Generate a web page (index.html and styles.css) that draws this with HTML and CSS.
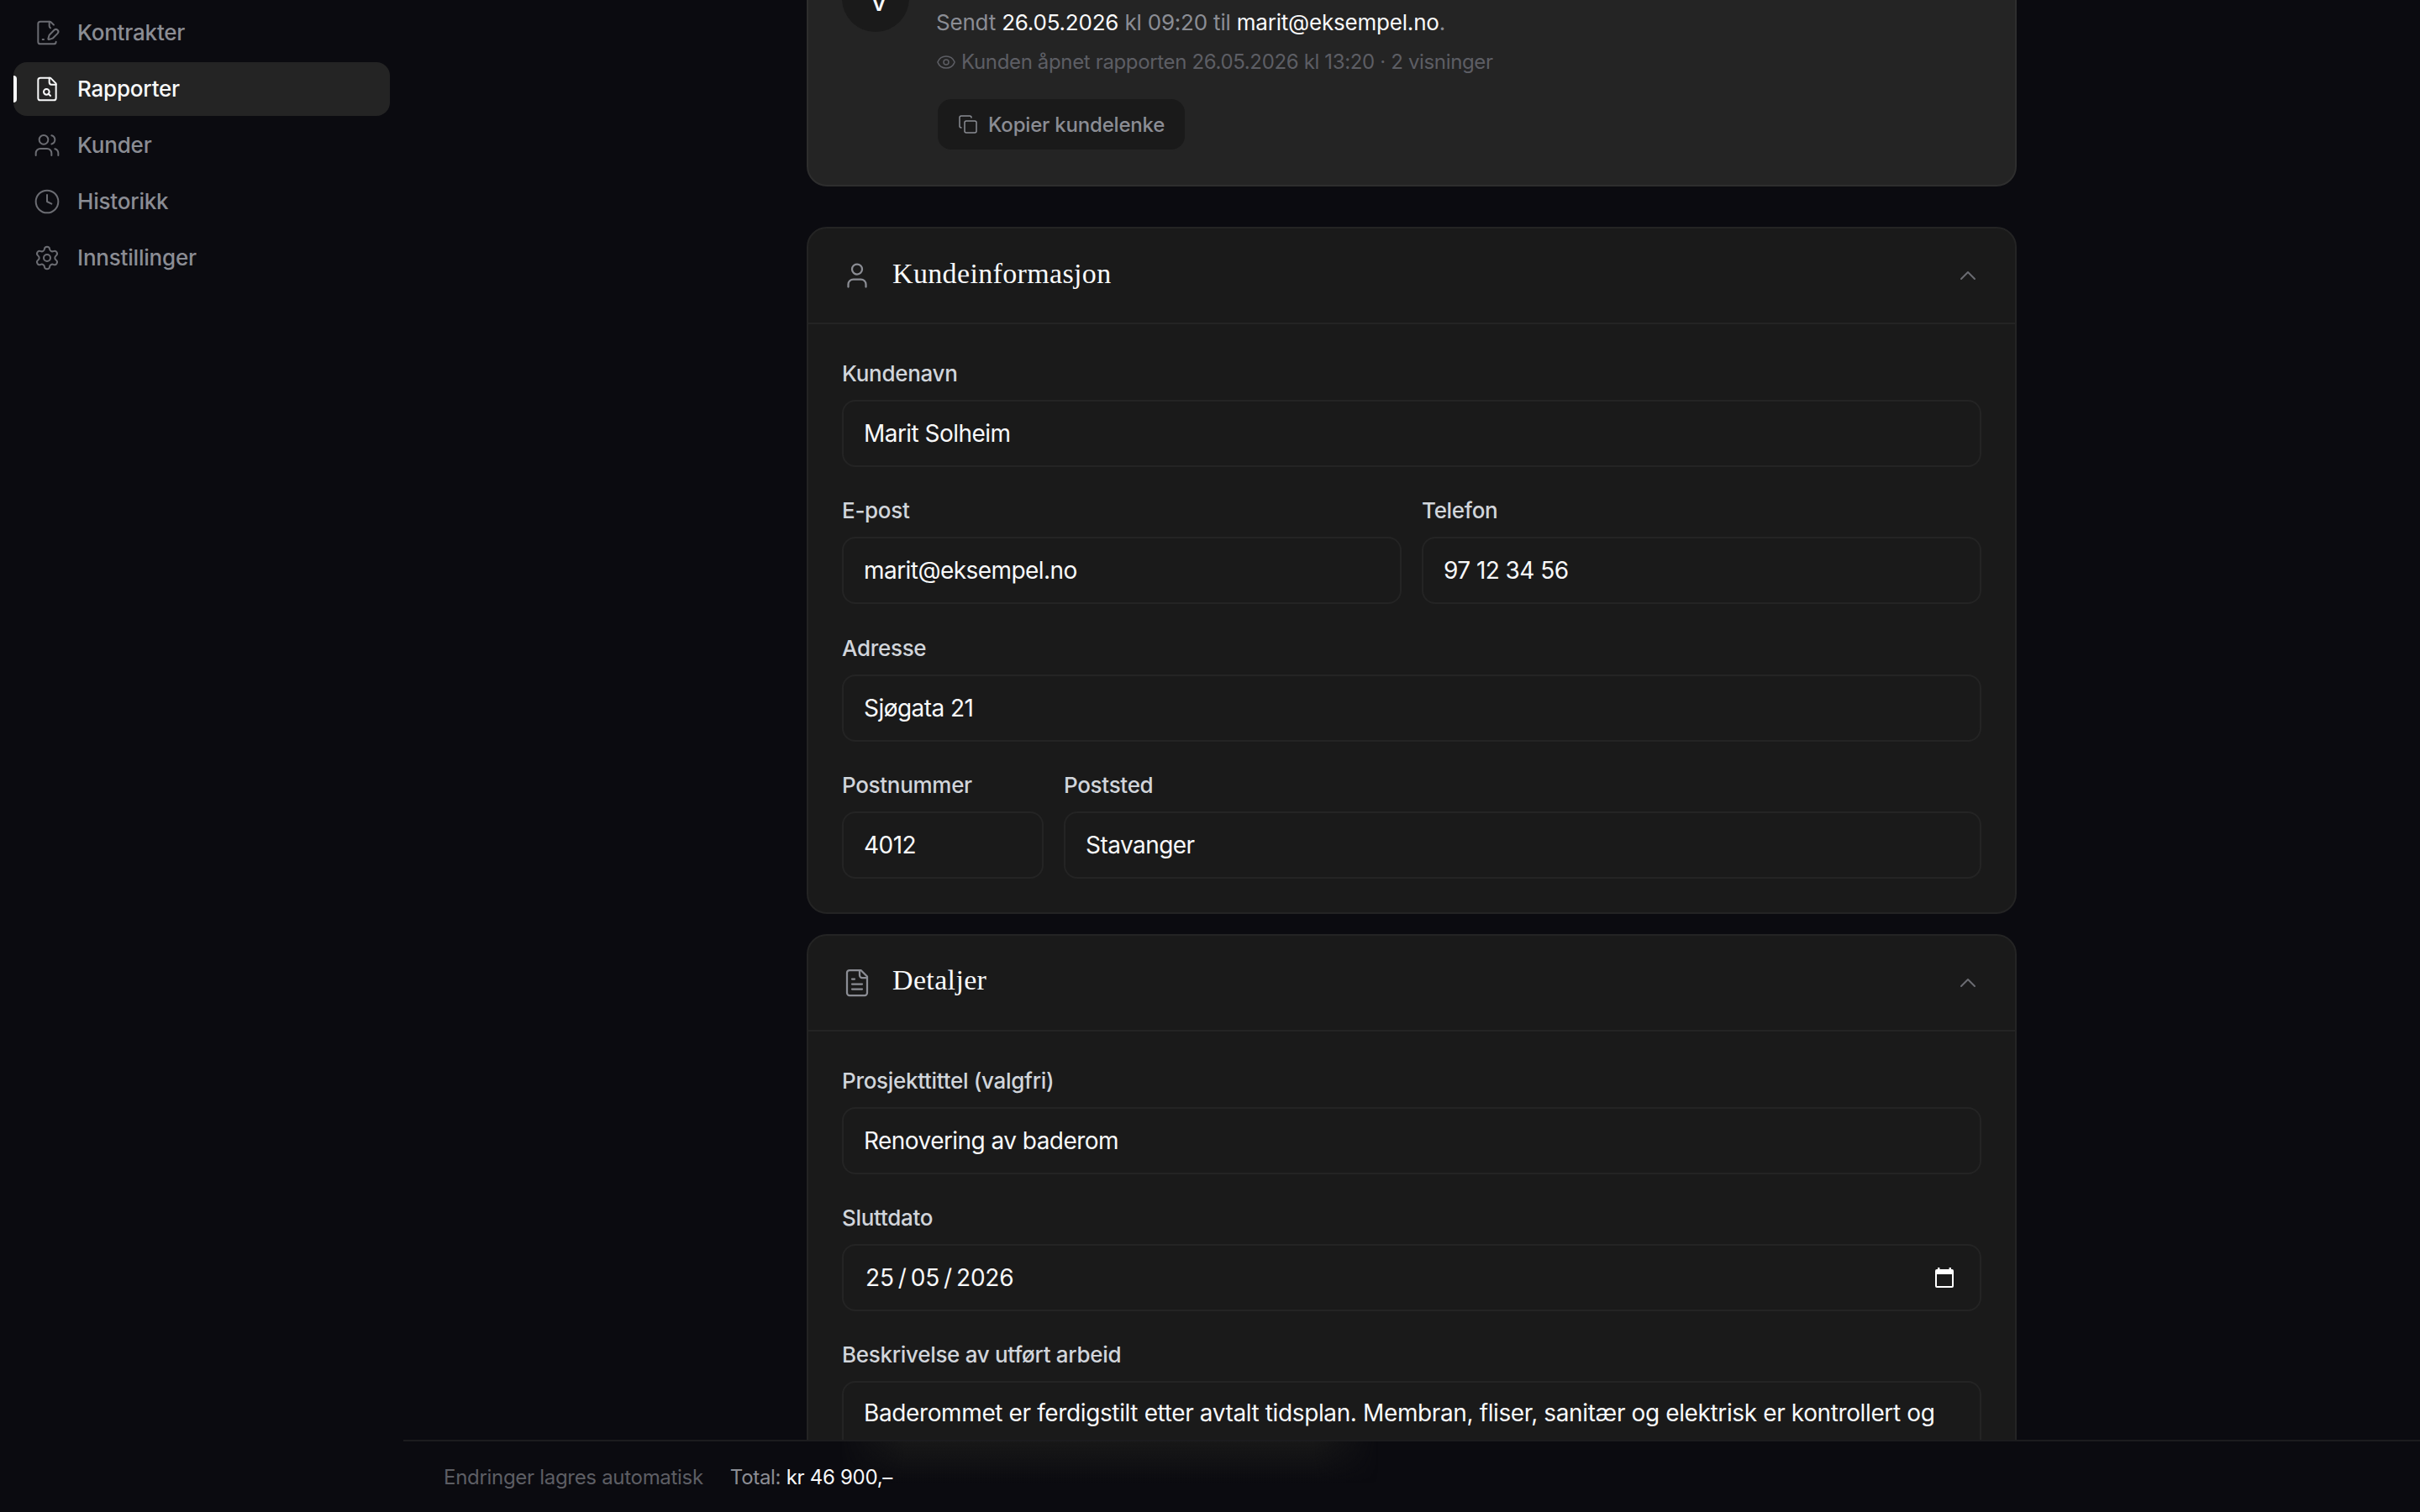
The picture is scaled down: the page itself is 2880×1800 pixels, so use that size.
FILE: index.html
```
<!DOCTYPE html>
<html lang="no">
  <head>
    <meta charset="UTF-8" />
    <meta name="viewport" content="width=device-width, initial-scale=1.0" />
    <title>Rapport</title>
    <link rel="stylesheet" href="styles.css">
  </head>
  <body>
    <div class="app">
      <aside class="sidebar">
        <a class="nav-item">
          <svg class="icon" viewBox="0 0 24 24">
            <path d="m18 5-2.414-2.414A2 2 0 0 0 14.172 2H6a2 2 0 0 0-2 2v16a2 2 0 0 0 2 2h12a2 2 0 0 0 2-2" />
            <path d="M14 2v4a2 2 0 0 0 1 1.700" />
            <path d="M21.378 12.626a1 1 0 0 0-3.004-3.004l-4.010 4.012a2 2 0 0 0-.506.854l-.837 2.870a.5.5 0 0 0 .620.620l2.870-.837a2 2 0 0 0 .854-.506z" />
            <path d="M8 18h1" />
          </svg>
          <span>Kontrakter</span>
        </a>
        <a class="nav-item active">
          <svg class="icon" viewBox="0 0 24 24">
            <path d="M15 2H6a2 2 0 0 0-2 2v16a2 2 0 0 0 2 2h12a2 2 0 0 0 2-2V7Z" />
            <path d="M14 2v4a2 2 0 0 0 2 2h4" />
            <circle cx="11.500" cy="14.500" r="2.500" />
            <path d="M13.300 16.300 15 18" />
          </svg>
          <span>Rapporter</span>
        </a>
        <a class="nav-item">
          <svg class="icon" viewBox="0 0 24 24">
            <path d="M16 21v-2a4 4 0 0 0-4-4H6a4 4 0 0 0-4 4v2" />
            <circle cx="9" cy="7" r="4" />
            <path d="M22 21v-2a4 4 0 0 0-3-3.870" />
            <path d="M16 3.130a4 4 0 0 1 0 7.750" />
          </svg>
          <span>Kunder</span>
        </a>
        <a class="nav-item">
          <svg class="icon" viewBox="0 0 24 24">
            <circle cx="12" cy="12" r="10" />
            <path d="M12 6v6l4 2" />
          </svg>
          <span>Historikk</span>
        </a>
        <a class="nav-item">
          <svg class="icon" viewBox="0 0 24 24">
            <path d="M9.671 4.136a2.340 2.340 0 0 1 4.659 0 2.340 2.340 0 0 0 3.319 1.915 2.340 2.340 0 0 1 2.330 4.033 2.340 2.340 0 0 0 0 3.831 2.340 2.340 0 0 1-2.330 4.033 2.340 2.340 0 0 0-3.319 1.915 2.340 2.340 0 0 1-4.659 0 2.340 2.340 0 0 0-3.320-1.915 2.340 2.340 0 0 1-2.330-4.033 2.340 2.340 0 0 0 0-3.831A2.340 2.340 0 0 1 6.350 6.051a2.340 2.340 0 0 0 3.319-1.915" />
            <circle cx="12" cy="12" r="3" />
          </svg>
          <span>Innstillinger</span>
        </a>
      </aside>

      <main class="main">
        <div class="content">
          <section class="status-card">
            <div class="avatar">V</div>
            <div class="status-body">
              <p class="sent">Sendt <b>26.05.2026</b> kl 09:20 til <b>marit@eksempel.no</b>.</p>
              <p class="opened">
                <svg class="icon" viewBox="0 0 24 24">
                  <path d="M2.062 12.348a1 1 0 0 1 0-.696 10.750 10.750 0 0 1 19.876 0 1 1 0 0 1 0 .696 10.750 10.750 0 0 1-19.876 0" />
                  <circle cx="12" cy="12" r="3" />
                </svg>
                <span>Kunden åpnet rapporten 26.05.2026 kl 13:20 · 2 visninger</span>
              </p>
              <button type="button" class="copy-button">
                <svg class="icon" viewBox="0 0 24 24">
                  <rect width="14" height="14" x="8" y="8" rx="2" />
                  <path d="M4 16c-1.100 0-2-.9-2-2V4c0-1.100.9-2 2-2h10c1.100 0 2 .9 2 2" />
                </svg>
                <span>Kopier kundelenke</span>
              </button>
            </div>
          </section>

          <section class="card">
            <header class="card-header">
              <svg class="icon" viewBox="0 0 24 24">
                <path d="M19 21v-2a4 4 0 0 0-4-4H9a4 4 0 0 0-4 4v2" />
                <circle cx="12" cy="7" r="4" />
              </svg>
              <h2>Kundeinformasjon</h2>
              <svg class="icon chevron" viewBox="0 0 24 24"><path d="m18 15-6-6-6 6" /></svg>
            </header>
            <div class="card-body">
              <div class="field">
                <label>Kundenavn</label>
                <div class="input">Marit Solheim</div>
              </div>
              <div class="row half">
                <div class="field">
                  <label>E-post</label>
                  <div class="input">marit@eksempel.no</div>
                </div>
                <div class="field">
                  <label>Telefon</label>
                  <div class="input">97 12 34 56</div>
                </div>
              </div>
              <div class="field">
                <label>Adresse</label>
                <div class="input">Sjøgata 21</div>
              </div>
              <div class="row postal">
                <div class="field">
                  <label>Postnummer</label>
                  <div class="input">4012</div>
                </div>
                <div class="field">
                  <label>Poststed</label>
                  <div class="input">Stavanger</div>
                </div>
              </div>
            </div>
          </section>

          <section class="card">
            <header class="card-header">
              <svg class="icon" viewBox="0 0 24 24">
                <path d="M15 2H6a2 2 0 0 0-2 2v16a2 2 0 0 0 2 2h12a2 2 0 0 0 2-2V7Z" />
                <path d="M14 2v4a2 2 0 0 0 2 2h4" />
                <path d="M10 9H8" />
                <path d="M16 13H8" />
                <path d="M16 17H8" />
              </svg>
              <h2>Detaljer</h2>
              <svg class="icon chevron" viewBox="0 0 24 24"><path d="m18 15-6-6-6 6" /></svg>
            </header>
            <div class="card-body">
              <div class="field">
                <label>Prosjekttittel (valgfri)</label>
                <div class="input">Renovering av baderom</div>
              </div>
              <div class="field">
                <label>Sluttdato</label>
                <div class="input date">
                  <span class="date-text"><span>25</span><i>/</i><span>05</span><i>/</i><span>2026</span></span>
                  <svg class="calendar" viewBox="0 0 22 24">
                    <path fill-rule="evenodd" d="M3 0h2.400v2h11.200V0H19v2h1a2 2 0 0 1 2 2v18a2 2 0 0 1-2 2H2a2 2 0 0 1-2-2V4a2 2 0 0 1 2-2h1zM2 8v14h18V8z" />
                  </svg>
                </div>
              </div>
              <div class="field">
                <label>Beskrivelse av utført arbeid</label>
                <div class="textarea">Baderommet er ferdigstilt etter avtalt tidsplan. Membran, fliser, sanitær og elektrisk er kontrollert og</div>
              </div>
            </div>
          </section>
        </div>
      </main>

      <footer class="bottom-bar">
        <span class="autosave">Endringer lagres automatisk</span>
        <span class="total">Total: <b>kr 46 900,–</b></span>
      </footer>
    </div>
  </body>
</html>
```

FILE: styles.css
```
* {
  box-sizing: border-box;
}

body {
  margin: 0;
  background: #0b0b10;
  color: #f8f9fa;
  font-family: Inter, "Liberation Sans", sans-serif;
  font-size: 28px;
}

.app {
  display: flex;
  height: 1800px;
  overflow: hidden;
}

p,
h2 {
  margin: 0;
}

b {
  font-weight: 400;
  color: #f8f9fa;
}

.icon {
  width: 32px;
  height: 32px;
  flex-shrink: 0;
  fill: none;
  stroke: currentColor;
  stroke-width: 1.5;
  stroke-linecap: round;
  stroke-linejoin: round;
}

/* sidebar */
.sidebar {
  width: 480px;
  flex-shrink: 0;
  padding: 7px 16px;
  display: flex;
  flex-direction: column;
  gap: 3px;
}

.nav-item {
  position: relative;
  display: flex;
  align-items: center;
  gap: 20px;
  height: 64px;
  width: 448px;
  padding-left: 24px;
  border-radius: 16px;
  color: #8b8d94;
  font-size: 26px;
  font-weight: 500;
  letter-spacing: -0.2px;
}

.nav-item span {
  padding-bottom: 2px;
}

.nav-item .icon {
  color: #6b6c72;
}

.nav-item.active {
  background: #242424;
}

.nav-item.active,
.nav-item.active .icon {
  color: #f8f9fa;
}

.nav-item.active::before {
  content: "";
  position: absolute;
  left: 0;
  top: 16px;
  width: 4px;
  height: 32px;
  border-radius: 0 4px 4px 0;
  background: #f8f9fa;
}

/* content */
.main {
  flex: 1;
  display: flex;
  justify-content: center;
  align-items: flex-start;
}

.content {
  width: 1440px;
  display: flex;
  flex-direction: column;
  gap: 24px;
}

.status-card {
  display: flex;
  gap: 32px;
  height: 266px;
  margin-top: -44px;
  margin-bottom: 24px;
  padding: 0 40px;
  background: #242424;
  border: 2px solid #2e2e2e;
  border-radius: 24px;
}

.avatar {
  width: 80px;
  height: 80px;
  display: flex;
  align-items: center;
  justify-content: center;
  padding: 4px 0 0 8px;
  border-radius: 50%;
  background: #1a1a1a;
  font-size: 36px;
}

.status-body {
  display: flex;
  flex-direction: column;
  align-items: flex-start;
  padding-top: 49px;
}

.sent {
  color: #8b8d94;
  font-size: 26px;
  line-height: 39px;
  letter-spacing: -0.2px;
}

.opened {
  display: flex;
  align-items: center;
  gap: 6px;
  margin-top: 10px;
  color: #5d5e64;
  font-size: 24px;
  line-height: 36px;
  letter-spacing: -0.35px;
}

.opened .icon {
  width: 24px;
  height: 24px;
}

.copy-button {
  display: flex;
  align-items: center;
  gap: 12px;
  height: 60px;
  width: 294px;
  margin-top: 26px;
  margin-left: 2px;
  padding: 0 0 0 24px;
  border: none;
  border-radius: 16px;
  background: #1a1a1a;
  color: #8b8d94;
  font-family: inherit;
  font-size: 24px;
  font-weight: 500;
  letter-spacing: -0.2px;
}

.copy-button .icon {
  width: 24px;
  height: 24px;
}

.card {
  background: #1a1a1a;
  border: 2px solid #242424;
  border-radius: 24px;
}

.card-header {
  display: flex;
  align-items: center;
  gap: 24px;
  height: 114px;
  padding: 0 40px;
  border-bottom: 2px solid #242424;
}

.card-header .icon {
  width: 36px;
  height: 36px;
  color: #8b8d94;
}

.card-header h2 {
  padding-bottom: 5px;
  font-family: "Liberation Serif", serif;
  font-size: 34px;
  font-weight: 500;
  letter-spacing: 0.35px;
}

.card-header .chevron {
  width: 32px;
  height: 32px;
  margin-left: auto;
  color: #6b6c72;
}

.card-body {
  display: flex;
  flex-direction: column;
  gap: 33.3px;
  padding: 40px;
}

.row {
  display: grid;
  gap: 24px;
}

.half {
  grid-template-columns: 1fr 1fr;
}

.postal {
  grid-template-columns: 240px 1fr;
}

.field label {
  display: block;
  margin-bottom: 13px;
  color: #d1d5db;
  font-size: 26px;
  font-weight: 500;
  line-height: 37px;
  letter-spacing: -0.3px;
}

.input,
.textarea {
  border: 2px solid #242424;
  border-radius: 16px;
  padding: 0 24px;
  letter-spacing: -0.38px;
}

.input {
  display: flex;
  align-items: center;
  height: 80px;
  letter-spacing: -0.55px;
}

.date {
  justify-content: space-between;
  padding-right: 31px;
}

.date-text {
  display: flex;
  padding-left: 2px;
  letter-spacing: -0.2px;
}

.date-text i {
  width: 20px;
  font-style: normal;
  text-align: center;
}

.calendar {
  width: 22px;
  height: 24px;
  fill: #fff;
}

.textarea {
  height: 240px;
  padding-top: 14px;
  line-height: 45px;
  white-space: nowrap;
}

/* bottom bar */
.bottom-bar {
  position: fixed;
  left: 480px;
  right: 0;
  bottom: 0;
  height: 86px;
  display: flex;
  align-items: center;
  gap: 32px;
  padding: 0 48px;
  border-top: 2px solid #1c1c1e;
  background: #0b0b10;
  font-size: 24px;
  letter-spacing: -0.3px;
}

.bottom-bar::before {
  content: "";
  position: absolute;
  left: 520px;
  top: 0;
  width: 640px;
  height: 50px;
  background: linear-gradient(#181818, rgba(24, 24, 24, 0));
  mask-image: linear-gradient(90deg, transparent, #000 12%, #000 88%, transparent);
}

.autosave,
.total {
  position: relative;
}

.autosave {
  color: #5d5e64;
}

.total {
  color: #8b8d94;
}
```
